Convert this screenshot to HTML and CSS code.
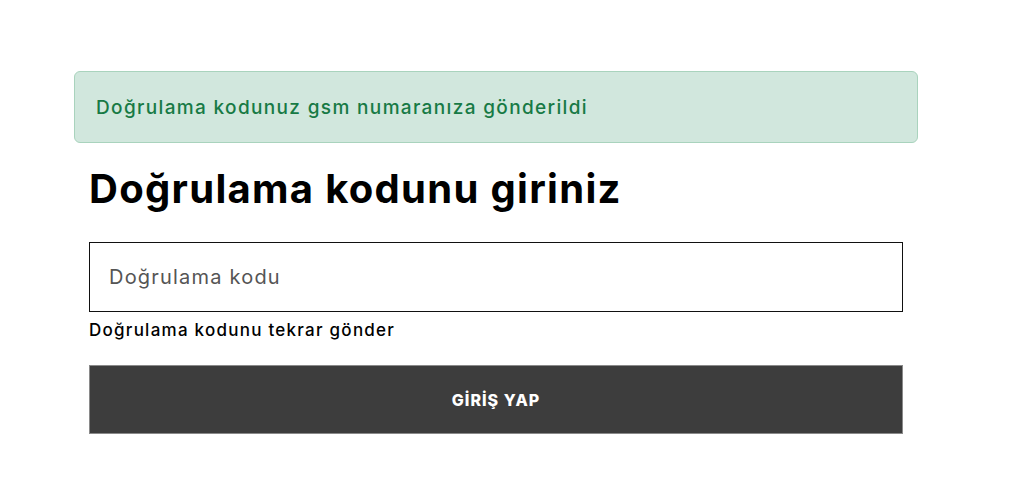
FILE: index.html
```html
<!DOCTYPE html>
<html lang="tr">
<head>
<meta charset="utf-8">
<link rel="stylesheet" href="styles.css">
</head>
<body>
<div class="container">
  <div class="alert">Doğrulama kodunuz gsm numaranıza gönderildi</div>
  <div class="form">
    <h1 class="title">Doğrulama kodunu giriniz</h1>
    <input class="code-input" type="text" placeholder="Doğrulama kodu">
    <a class="resend" href="#">Doğrulama kodunu tekrar gönder</a>
    <button class="submit" type="button">GİRİŞ YAP</button>
  </div>
</div>
</body>
</html>
```

FILE: styles.css
```css
html, body {
  margin: 0;
  padding: 0;
  background: #fff;
}
body {
  font-family: Inter, "Open Sans", sans-serif;
  color: #000;
}
.container {
  width: 844px;
  margin: 0 0 0 74px;
  padding-top: 71px;
}
.alert {
  box-sizing: border-box;
  height: 72px;
  padding: 0 21px;
  display: flex;
  align-items: center;
  background: #d1e7dd;
  border: 1px solid #a9d3bd;
  border-radius: 6px;
  color: #177a45;
  font-size: 19px;
  letter-spacing: 1.35px;
  font-weight: 500;
}
.form {
  padding: 0 15px;
  display: flex;
  flex-direction: column;
}
.title {
  margin: 20px 0 0 0;
  font-size: 40px;
  font-weight: 700;
  letter-spacing: 1.3px;
  line-height: 52px;
  height: 52px;
}
.code-input {
  box-sizing: border-box;
  margin-top: 27px;
  width: 814px;
  height: 70px;
  border: 1.5px solid #111;
  padding: 0 19px;
  font-family: inherit;
  font-size: 20px;
  letter-spacing: 1.2px;
  outline: none;
}
.code-input::placeholder {
  color: #555;
}
.resend {
  margin-top: 6px;
  font-size: 17px;
  letter-spacing: 1.25px;
  font-weight: 500;
  color: #000;
  text-decoration: none;
  line-height: 24px;
}
.submit {
  box-sizing: border-box;
  margin-top: 23px;
  width: 814px;
  height: 69px;
  background: #3d3d3d;
  border: 1px solid #8a8a8a;
  color: #fff;
  font-family: inherit;
  font-size: 16px;
  letter-spacing: 1px;
  font-weight: 800;
  cursor: pointer;
}
```
